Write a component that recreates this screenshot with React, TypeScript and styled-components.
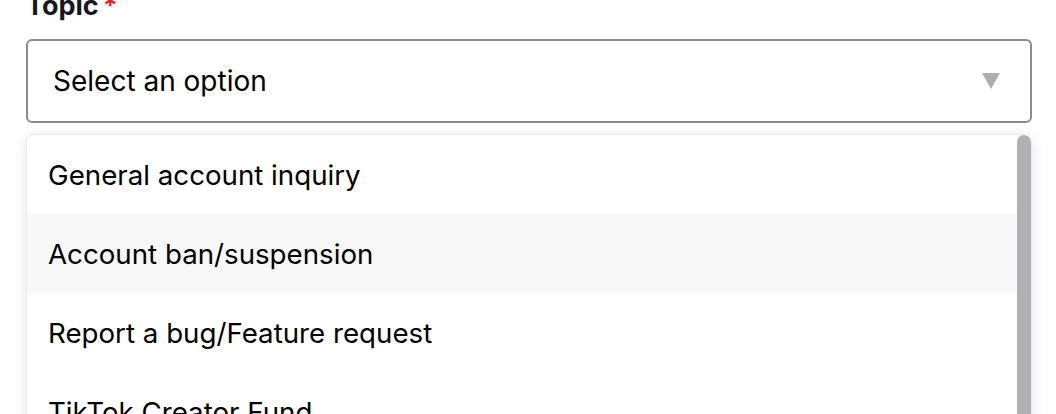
import React from 'react'
import styled, { createGlobalStyle } from 'styled-components'

const GlobalStyle = createGlobalStyle`
  html, body {
    margin: 0;
    padding: 0;
    background: #ffffff;
    overflow: hidden;
  }
  body {
    font-family: Inter, "Liberation Sans", Arial, sans-serif;
    color: #161823;
  }
`

const Field = styled.div`
  padding: 0 24px 0 26px;
`

const Label = styled.div`
  margin-top: -10px;
  font-size: 27px;
  line-height: 32px;
  font-weight: 700;
  color: #161823;
`

const Required = styled.span`
  color: #ee1d23;
  margin-left: 4px;
`

const SelectBox = styled.div`
  margin-top: 17px;
  height: 80px;
  box-sizing: content-box;
  border: 2px solid #8a8b91;
  border-radius: 6px;
  display: flex;
  align-items: center;
  justify-content: space-between;
  padding: 0 30px 0 25px;
  font-size: 28px;
  color: #000000;
`

const Arrow = styled.svg`
  width: 18px;
  height: 16px;
  fill: #aeadb2;
`

const MenuWrap = styled.div`
  position: relative;
  margin-top: 11px;
  border: 1px solid #ececec;
  border-radius: 8px;
  box-shadow: 0 2px 14px rgba(0, 0, 0, 0.1);
  background: #ffffff;
  overflow: hidden;
`

const Menu = styled.ul`
  list-style: none;
  margin: 0;
  padding: 0 14px 0 0;
  max-height: 420px;
  overflow: hidden;
`

// scroll thumb drawn over the list's right edge
const Thumb = styled.div`
  position: absolute;
  top: 0;
  right: 0;
  width: 14px;
  height: 330px;
  border-radius: 7px;
  background: #b1b0b5;
`

const Option = styled.li<{ $active?: boolean }>`
  height: 79px;
  display: flex;
  align-items: center;
  padding-left: 21px;
  font-size: 27.7px;
  color: #000000;
  background: ${(p) => (p.$active ? '#f8f8f8' : 'transparent')};
`

const topics = [
  'General account inquiry',
  'Account ban/suspension',
  'Report a bug/Feature request',
  'TikTok Creator Fund',
  'LIVE',
  'Other',
]

const App = () => (
  <>
    <GlobalStyle />
    <Field>
      <Label>
        Topic<Required>*</Required>
      </Label>
      <SelectBox>
        <span>Select an option</span>
        <Arrow viewBox="0 0 18 16">
          <path d="M0 0 H18 L9 16 Z" />
        </Arrow>
      </SelectBox>
      <MenuWrap>
        <Menu>
          {topics.map((t, i) => (
            <Option key={t} $active={i === 1}>
              {t}
            </Option>
          ))}
        </Menu>
        <Thumb />
      </MenuWrap>
    </Field>
  </>
)

export default App
